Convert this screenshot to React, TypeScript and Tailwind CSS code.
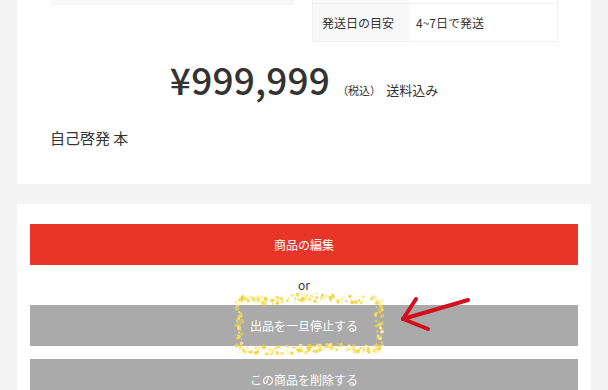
import React from "react";

const FONT = { fontFamily: '"Noto Sans CJK JP", "Noto Sans", sans-serif' };

// きらきら枠の点を作る（固定シード）
function sparkleDots() {
  let seed = 7;
  const rnd = () => {
    seed = (seed * 9301 + 49297) % 233280;
    return seed / 233280;
  };
  const dots: { x: number; y: number; r: number; o: number }[] = [];
  const x0 = 6, y0 = 6, x1 = 146, y1 = 56;
  const push = (x: number, y: number) => {
    dots.push({ x, y, r: 0.6 + rnd() * 1.5, o: 0.5 + rnd() * 0.45 });
  };
  for (let i = 0; i < 150; i++) {
    const t = rnd();
    push(x0 + (x1 - x0) * t, y0 + (rnd() - 0.5) * 8 + Math.sin(t * 9) * 1.5);
    const u = rnd();
    push(x0 + (x1 - x0) * u, y1 + (rnd() - 0.5) * 8 + Math.sin(u * 7) * 1.5);
  }
  for (let i = 0; i < 50; i++) {
    push(x0 + (rnd() - 0.5) * 7, y0 + (y1 - y0) * rnd());
    push(x1 + (rnd() - 0.5) * 7, y0 + (y1 - y0) * rnd());
  }
  return dots;
}

const dots = sparkleDots();

export default function App() {
  return (
    <div className="min-h-[390px] bg-[#f4f4f4] px-[17px] overflow-hidden" style={FONT}>
      {/* 商品情報カード */}
      <section className="bg-white px-[33px] pb-[36px]">
        <div className="flex gap-[17px] items-start">
          <div className="w-[245px] h-[5px] bg-[#f8f8f8] border-b border-[#f0f0f0]" />
          <div className="w-[246px] ml-auto">
            <div className="h-[3px] border-x border-[#f0f0f0] flex">
              <div className="w-[96px] bg-[#f8f8f8]" />
            </div>
            <div className="flex h-[39px] border border-[#f0f0f0] text-[12px] text-[#333]">
              <div className="w-[96px] bg-[#f8f8f8] flex items-center pl-[9px]">発送日の目安</div>
              <div className="flex items-center pl-[7px]">4~7日で発送</div>
            </div>
          </div>
        </div>
        <div className="flex items-baseline justify-center mt-[12px] text-[#333]">
          <span className="text-[37px] font-medium leading-[50px] tracking-[0.2px]">¥999,999</span>
          <span className="text-[11px] ml-[7px]">（税込）</span>
          <span className="text-[13px] ml-[5px]">送料込み</span>
        </div>
        <div className="mt-[24px] text-[15px] text-[#333] leading-[20px]">自己啓発 本</div>
      </section>

      {/* 操作ボタン */}
      <section className="bg-white mt-[20px] px-[13px] pt-[20px] pb-[20px]">
        <button className="w-full h-[41px] bg-[#e8352a] text-white text-[12px]">商品の編集</button>
        <div className="h-[40px] flex items-center justify-center text-[12px] text-[#333]">or</div>
        <div className="relative">
          <button className="w-full h-[41px] bg-[#aaaaaa] text-white text-[12px]">出品を一旦停止する</button>
          <svg className="absolute left-[203px] top-[-12px] pointer-events-none" width="152" height="64" viewBox="0 0 152 64">
            {dots.map((d, i) => (
              <circle key={i} cx={d.x} cy={d.y} r={d.r} fill={i % 3 === 0 ? "#fff3a8" : "#f2d43a"} opacity={d.o} />
            ))}
          </svg>
          <svg className="absolute left-[360px] top-[-15px] pointer-events-none" width="90" height="50" viewBox="0 0 90 50">
            <g stroke="#d3101d" strokeWidth="4" strokeLinecap="round" fill="none">
              <path d="M78 10 L13 29" />
              <path d="M13 29 L26 9" />
              <path d="M13 29 L38 39" />
            </g>
          </svg>
        </div>
        <button className="w-full h-[41px] bg-[#aaaaaa] text-white text-[12px] mt-[13px]">この商品を削除する</button>
      </section>
    </div>
  );
}
